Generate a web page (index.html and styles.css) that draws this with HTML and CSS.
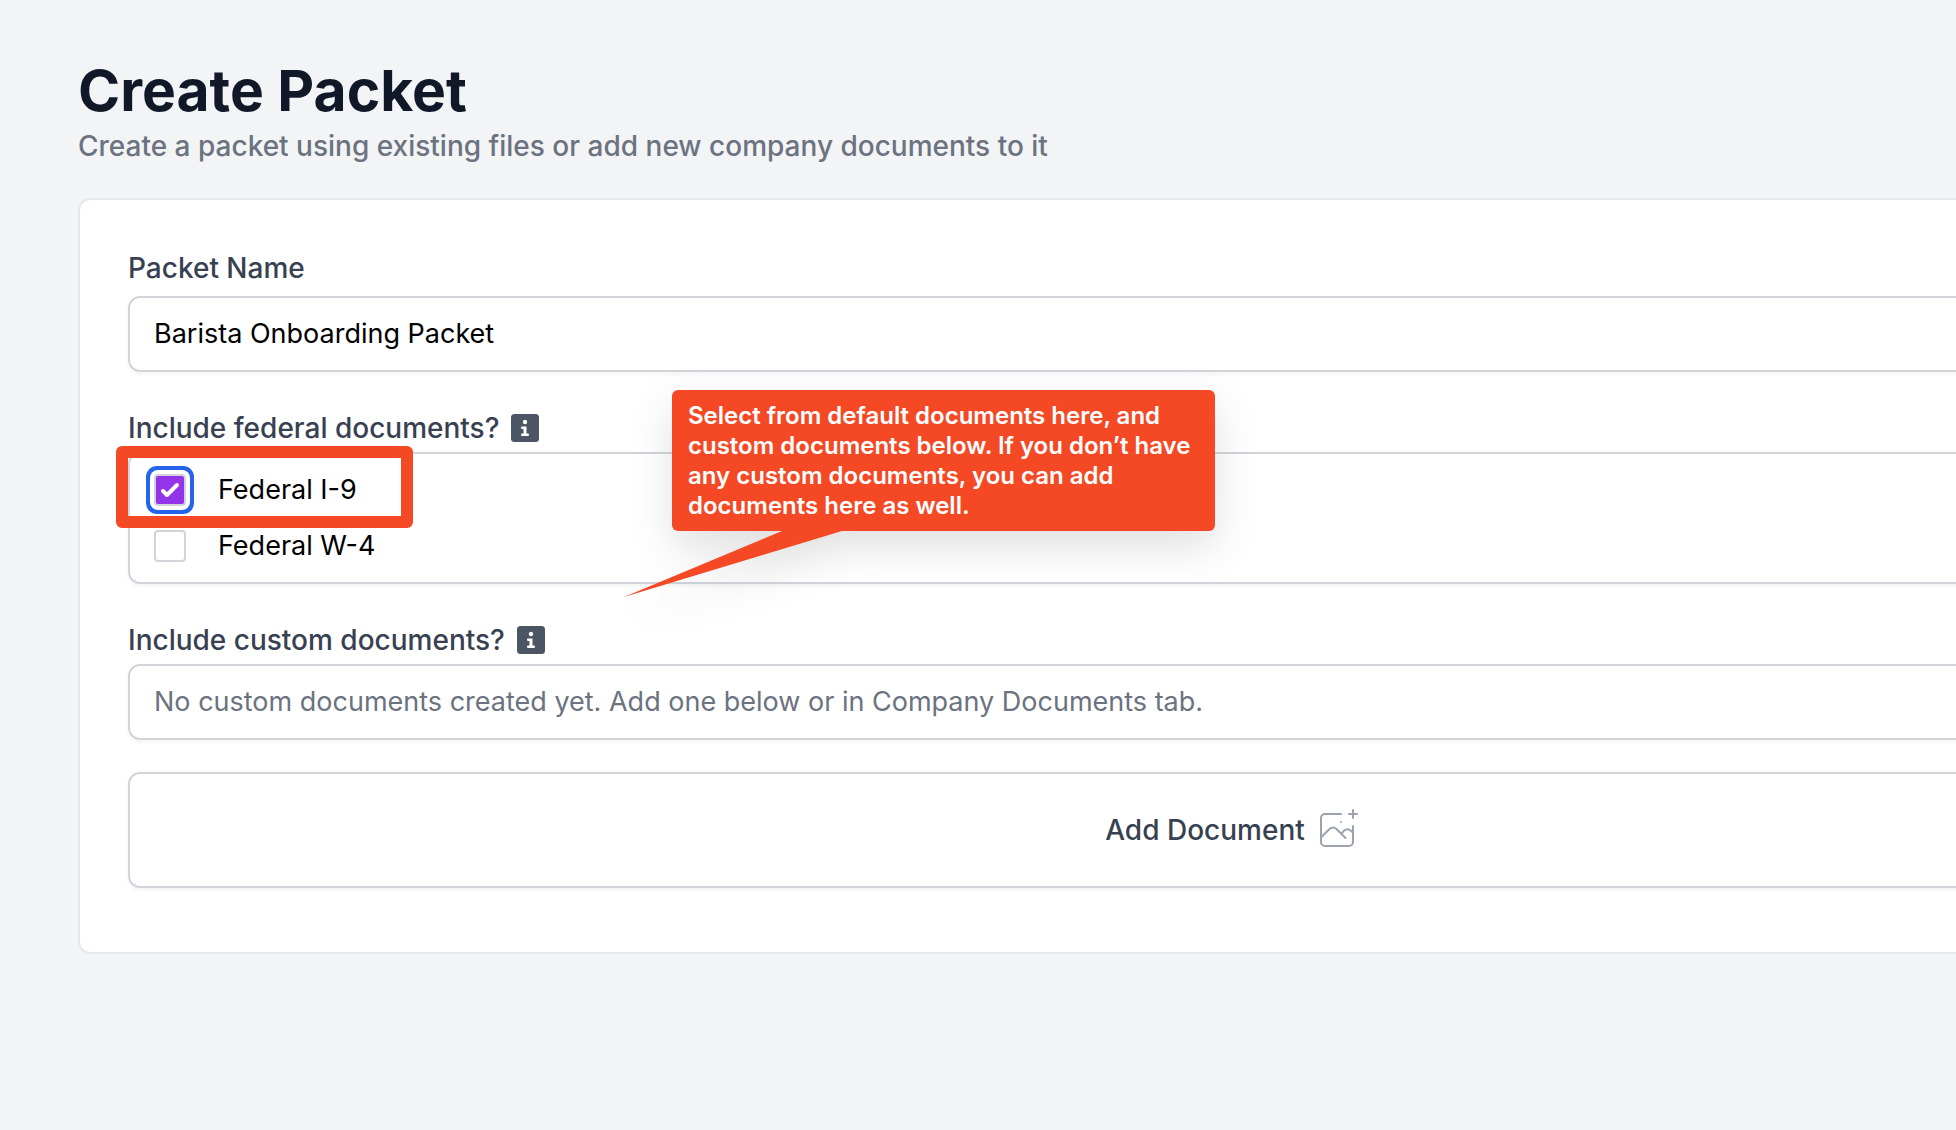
FILE: index.html
```html
<!DOCTYPE html>
<html lang="en">

<head>
    <meta charset="UTF-8">
    <meta name="viewport" content="width=device-width, initial-scale=1.0">
    <title>Create Packet</title>
    <link rel="stylesheet" href="styles.css">
</head>

<body>

    <main class="page">
        <header>
            <h1 class="title">Create Packet</h1>
            <p class="subtitle">Create a packet using existing files or add new company documents to it</p>
        </header>

        <form class="card">
            <!-- Packet name -->
            <div class="form-group name-group">
                <label class="label" for="packet-name">Packet Name</label>
                <input class="field" type="text" id="packet-name" value="Barista Onboarding Packet">
            </div>

            <!-- Federal documents -->
            <div class="form-group" role="group" aria-labelledby="federal-label">
                <div class="label">
                    <span id="federal-label">Include federal documents?</span>
                    <svg class="info-icon" viewBox="0 0 28 28" aria-hidden="true">
                        <rect width="28" height="28" rx="3.500" />
                        <circle cx="14" cy="8" r="2.200" />
                        <path d="M11 12.500h4.500v7h1.500q1 0 1 1.200t-1 1.300h-6q-1 0-1-1.300t1-1.200h1.500v-4.500h-1.500q-1 0-1-1.200t1-1.300z" />
                    </svg>
                </div>
                <div class="options">
                    <div class="option">
                        <input class="checkbox focused" type="checkbox" id="federal-i9" checked>
                        <label for="federal-i9">Federal I-9</label>
                    </div>
                    <div class="option">
                        <input class="checkbox" type="checkbox" id="federal-w4">
                        <label for="federal-w4">Federal W-4</label>
                    </div>
                    <div class="highlight"></div>
                    <div class="callout">
                        Select from default documents here, and custom documents below. If you don’t have any custom documents, you can add documents here as well.
                        <svg class="callout-tail" viewBox="0 0 218 66" aria-hidden="true">
                            <path d="M158 0L0 66L218 0z" />
                        </svg>
                    </div>
                </div>
            </div>

            <!-- Custom documents -->
            <div class="form-group">
                <div class="label">
                    <span>Include custom documents?</span>
                    <svg class="info-icon" viewBox="0 0 28 28" aria-hidden="true">
                        <rect width="28" height="28" rx="3.500" />
                        <circle cx="14" cy="8" r="2.200" />
                        <path d="M11 12.500h4.500v7h1.500q1 0 1 1.200t-1 1.300h-6q-1 0-1-1.300t1-1.200h1.500v-4.500h-1.500q-1 0-1-1.200t1-1.300z" />
                    </svg>
                </div>
                <div class="field empty">No custom documents created yet. Add one below or in Company Documents tab.</div>
            </div>

            <button class="add-button" type="button">
                Add Document
                <svg class="image-icon" viewBox="0 0 40 40" aria-hidden="true">
                    <path d="M22 4H6a4 4 0 0 0-4 4v24a4 4 0 0 0 4 4h24a4 4 0 0 0 4-4V16" />
                    <path d="M2 27.500l8.500-8.500q3.500-3 7 0L26.500 28M22.500 23.500l2.500-2.800q3-2.800 6.200-.5l2.800 2.300" />
                    <path d="M34 0v8M30 4h8" />
                    <circle cx="22" cy="12" r="1" />
                </svg>
            </button>
        </form>
    </main>

</body>

</html>
```

FILE: styles.css
```css
* {
    margin: 0;
    padding: 0;
    box-sizing: border-box;
}

body {
    font-family: Inter, "Liberation Sans", sans-serif;
    font-size: 28px;
    line-height: 40px;
    background-color: #f3f4f6;
    color: #000;
}

.page {
    padding: 60px 0 60px 78px;
    overflow: hidden;
}

/* Page heading */
.title {
    font-size: 57px;
    line-height: 62px;
    font-weight: 700;
    color: #111827;
}

.subtitle {
    margin-top: 4px;
    font-weight: 500;
    color: #6b7280;
}

/* Card runs past the right edge of the window */
.card {
    margin-top: 32px;
    margin-right: -430px;
    padding: 48px 48px 64px;
    background-color: #fff;
    border: 2px solid #e5e7eb;
    border-radius: 12px;
}

.form-group {
    display: flex;
    flex-direction: column;
    gap: 4px;
    margin-bottom: 36px;
}

.name-group {
    gap: 8px;
}

.form-group:last-of-type {
    margin-bottom: 32px;
}

.label {
    display: flex;
    align-items: center;
    gap: 12px;
    font-weight: 500;
    color: #374151;
}

/* Info badge */
.info-icon {
    width: 28px;
    height: 28px;
    fill: #fff;
}

.info-icon rect {
    fill: #4b5563;
}

/* Fields */
.field,
.options,
.add-button {
    width: 100%;
    font: inherit;
    background-color: #fff;
    border: 2px solid #d1d5db;
    border-radius: 12px;
    box-shadow: 0 2px 4px rgba(0, 0, 0, 0.05);
}

.field,
.options {
    font-size: 27px;
}

.field {
    padding: 16px 24px;
}

.empty {
    color: #6b7280;
}

.options {
    position: relative;
    padding: 8px 24px;
}

.option {
    display: flex;
    align-items: center;
    gap: 32px;
    height: 56px;
}

.checkbox {
    appearance: none;
    width: 32px;
    height: 32px;
    border: 2px solid #d1d5db;
    border-radius: 4px;
    background-color: #fff;
}

.checkbox:checked {
    background: #9333ea url("data:image/svg+xml,%3Csvg xmlns='http://www.w3.org/2000/svg' viewBox='0 0 28 28'%3E%3Cpath d='M7 15l4 4L21 9' fill='none' stroke='white' stroke-width='4' stroke-linecap='round' stroke-linejoin='round'/%3E%3C/svg%3E") center / 28px no-repeat;
}

.focused {
    box-shadow: 0 0 0 4px #fff, 0 0 0 8px #2563eb;
}

/* Add document */
.add-button {
    display: flex;
    align-items: center;
    justify-content: center;
    gap: 14px;
    height: 116px;
    font-weight: 500;
    color: #374151;
    cursor: pointer;
}

.image-icon {
    width: 40px;
    height: 40px;
    overflow: visible;
    fill: none;
    stroke: #9ca3af;
    stroke-width: 2;
    stroke-linecap: round;
}

.image-icon circle {
    fill: #9ca3af;
    stroke: none;
}

/* Annotations over the form */
.highlight {
    position: absolute;
    top: -8px;
    left: -14px;
    width: 297px;
    height: 82px;
    border: 12px solid #f54824;
    border-radius: 6px;
    pointer-events: none;
}

.callout {
    position: absolute;
    top: -64px;
    left: 542px;
    width: 543px;
    padding: 11px 16px 10px;
    background-color: #f54824;
    border-radius: 6px;
    color: #fff;
    font-size: 24px;
    line-height: 30px;
    font-weight: 600;
    filter: drop-shadow(0 16px 20px rgba(0, 0, 0, 0.12));
}

.callout-tail {
    position: absolute;
    top: 100%;
    left: -48px;
    width: 218px;
    height: 66px;
    fill: #f54824;
}
```
